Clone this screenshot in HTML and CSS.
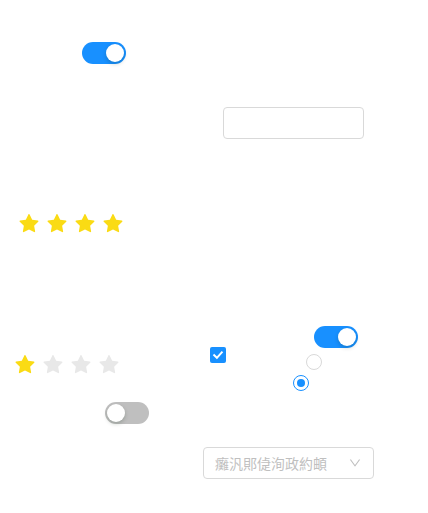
FILE: index.html
```html
<!DOCTYPE html>
<html>
<head>
<meta charset="utf-8">
<link rel="stylesheet" href="styles.css">
</head>
<body>
<div class="row row1">
  <span class="switch on"><span class="knob"></span></span>
</div>
<div class="row row2">
  <input class="input" type="text">
</div>
<div class="row row3">
  <div class="rate">
    <svg class="star full" viewBox="64 64 896 896"><path d="M908.1 353.1l-253.9-36.9L540.7 86.1c-3.1-6.3-8.2-11.4-14.5-14.5-15.8-7.8-35-1.3-42.9 14.5L369.8 316.2l-253.9 36.9c-7 1-13.4 4.3-18.3 9.3a32.05 32.05 0 00.6 45.3l183.7 179.1-43.4 252.9a31.95 31.95 0 0046.4 33.7L512 754l227.1 119.4c6.2 3.3 13.4 4.4 20.3 3.2 17.4-3 29.1-19.5 26.1-36.9l-43.4-252.9 183.7-179.1c5-4.9 8.3-11.3 9.3-18.3 2.7-17.500-9.5-33.700-27-36.300z"/></svg>
    <svg class="star full" viewBox="64 64 896 896"><path d="M908.1 353.1l-253.9-36.9L540.7 86.1c-3.1-6.3-8.2-11.4-14.5-14.5-15.8-7.8-35-1.3-42.9 14.5L369.8 316.2l-253.9 36.9c-7 1-13.4 4.3-18.3 9.3a32.05 32.05 0 00.6 45.3l183.7 179.1-43.4 252.9a31.95 31.95 0 0046.4 33.7L512 754l227.1 119.4c6.2 3.3 13.4 4.4 20.3 3.2 17.4-3 29.1-19.5 26.1-36.9l-43.4-252.9 183.7-179.1c5-4.9 8.3-11.3 9.3-18.3 2.7-17.5-9.5-33.7-27-36.3z"/></svg>
    <svg class="star full" viewBox="64 64 896 896"><path d="M908.1 353.1l-253.9-36.9L540.7 86.1c-3.1-6.3-8.2-11.4-14.5-14.5-15.8-7.8-35-1.3-42.9 14.5L369.8 316.2l-253.9 36.9c-7 1-13.4 4.3-18.3 9.3a32.05 32.05 0 00.6 45.3l183.7 179.1-43.4 252.9a31.95 31.95 0 0046.4 33.7L512 754l227.1 119.4c6.2 3.3 13.4 4.4 20.3 3.2 17.4-3 29.1-19.5 26.1-36.9l-43.4-252.9 183.7-179.1c5-4.9 8.3-11.3 9.3-18.3 2.7-17.5-9.5-33.7-27-36.3z"/></svg>
    <svg class="star full" viewBox="64 64 896 896"><path d="M908.1 353.1l-253.9-36.9L540.7 86.1c-3.1-6.3-8.2-11.4-14.5-14.5-15.8-7.8-35-1.3-42.9 14.5L369.8 316.2l-253.9 36.9c-7 1-13.4 4.3-18.3 9.3a32.05 32.05 0 00.6 45.3l183.7 179.1-43.4 252.9a31.95 31.95 0 0046.4 33.7L512 754l227.1 119.4c6.2 3.3 13.4 4.4 20.3 3.2 17.4-3 29.1-19.5 26.1-36.9l-43.4-252.9 183.7-179.1c5-4.9 8.3-11.3 9.3-18.3 2.7-17.5-9.5-33.7-27-36.3z"/></svg>
  </div>
</div>
<div class="row row4">
  <div class="rate rate2">
    <svg class="star full" viewBox="64 64 896 896"><path d="M908.1 353.1l-253.9-36.9L540.7 86.1c-3.1-6.3-8.2-11.4-14.5-14.5-15.8-7.8-35-1.3-42.9 14.5L369.8 316.2l-253.9 36.9c-7 1-13.4 4.3-18.3 9.3a32.05 32.05 0 00.6 45.3l183.7 179.1-43.4 252.9a31.95 31.95 0 0046.4 33.7L512 754l227.1 119.4c6.2 3.3 13.4 4.4 20.3 3.2 17.4-3 29.1-19.5 26.1-36.9l-43.4-252.9 183.7-179.1c5-4.9 8.3-11.3 9.3-18.3 2.7-17.5-9.5-33.7-27-36.3z"/></svg>
    <svg class="star empty" viewBox="64 64 896 896"><path d="M908.1 353.1l-253.9-36.9L540.7 86.1c-3.1-6.3-8.2-11.4-14.5-14.5-15.8-7.8-35-1.3-42.9 14.5L369.8 316.2l-253.9 36.9c-7 1-13.4 4.3-18.3 9.3a32.05 32.05 0 00.6 45.3l183.7 179.1-43.4 252.9a31.95 31.95 0 0046.4 33.7L512 754l227.1 119.4c6.2 3.3 13.4 4.4 20.3 3.2 17.4-3 29.1-19.5 26.1-36.9l-43.4-252.9 183.7-179.1c5-4.9 8.3-11.3 9.3-18.3 2.7-17.5-9.5-33.7-27-36.3z"/></svg>
    <svg class="star empty" viewBox="64 64 896 896"><path d="M908.1 353.1l-253.9-36.9L540.7 86.1c-3.1-6.3-8.2-11.4-14.5-14.5-15.8-7.8-35-1.3-42.9 14.5L369.8 316.2l-253.9 36.9c-7 1-13.4 4.3-18.3 9.3a32.05 32.05 0 00.6 45.3l183.7 179.1-43.4 252.9a31.95 31.95 0 0046.4 33.7L512 754l227.1 119.4c6.2 3.3 13.4 4.4 20.3 3.2 17.4-3 29.1-19.5 26.1-36.9l-43.4-252.9 183.7-179.1c5-4.9 8.3-11.3 9.3-18.3 2.7-17.5-9.5-33.7-27-36.3z"/></svg>
    <svg class="star empty" viewBox="64 64 896 896"><path d="M908.1 353.1l-253.9-36.9L540.7 86.1c-3.1-6.3-8.2-11.4-14.5-14.5-15.8-7.8-35-1.3-42.9 14.5L369.8 316.2l-253.9 36.9c-7 1-13.4 4.3-18.3 9.3a32.05 32.05 0 00.6 45.3l183.7 179.1-43.4 252.9a31.95 31.95 0 0046.4 33.7L512 754l227.1 119.4c6.2 3.3 13.4 4.4 20.3 3.2 17.4-3 29.1-19.5 26.1-36.9l-43.4-252.9 183.7-179.1c5-4.9 8.3-11.3 9.3-18.3 2.7-17.5-9.5-33.7-27-36.3z"/></svg>
  </div>
  <span class="checkbox">
    <svg viewBox="0 0 16 16"><path d="M4.2 8.2 L6.9 10.8 L11.8 5.4" fill="none" stroke="#fff" stroke-width="2" stroke-linecap="square"/></svg>
  </span>
  <div class="col">
    <span class="switch on sw2"><span class="knob"></span></span>
    <span class="radio r1"></span>
    <span class="radio checked r2"><span class="dot"></span></span>
  </div>
</div>
<div class="row row5">
  <span class="switch off"><span class="knob"></span></span>
</div>
<div class="row row6">
  <div class="select">
    <span class="placeholder">癱汎郥偼洵政約頔</span>
    <svg class="arrow" viewBox="64 64 896 896"><path d="M884 256h-75c-5.1 0-9.9 2.5-12.9 6.6L512 654.2 227.9 262.6c-3-4.1-7.8-6.6-12.9-6.6h-75c-6.5 0-10.3 7.4-6.5 12.7l352.6 486.1c12.8 17.6 39 17.6 51.7 0l352.6-486.1c3.9-5.3.1-12.7-6.4-12.7z"/></svg>
  </div>
</div>
</body>
</html>
```

FILE: styles.css
```css
html, body {
  margin: 0;
  padding: 0;
  background: #fff;
  font-family: "Noto Sans", "Noto Sans CJK SC", sans-serif;
}
.row {
  display: flex;
  align-items: flex-start;
}
.row1 { margin-top: 42px; padding-left: 82px; height: 22px; }
.row2 { margin-top: 43px; padding-left: 223px; height: 32px; }
.row3 { margin-top: 75px; padding-left: 19px; height: 20px; }
.row4 { margin-top: 92px; padding-left: 15px; height: 65px; }
.row5 { margin-top: 11px; padding-left: 105px; height: 22px; }
.row6 { margin-top: 23px; padding-left: 203px; height: 32px; }

.switch {
  display: inline-block;
  box-sizing: border-box;
  width: 44px;
  height: 22px;
  border-radius: 11px;
  padding: 2px;
  display: flex;
}
.switch.on { background: #1890ff; justify-content: flex-end; }
.switch.off { background: #bfbfbf; justify-content: flex-start; }
.knob {
  width: 18px;
  height: 18px;
  border-radius: 50%;
  background: #fff;
  box-shadow: 0 2px 4px rgba(0, 35, 11, 0.2);
}

.input {
  box-sizing: border-box;
  width: 141px;
  height: 32px;
  margin: 0;
  border: 1px solid #d9d9d9;
  border-radius: 4px;
  outline: none;
  background: #fff;
}

.rate {
  display: flex;
  gap: 8px;
}
.rate2 { margin-top: 29px; }
.star { width: 20px; height: 20px; display: block; }
.star.full { fill: #fadb14; }
.star.empty { fill: #e8e8e8; }

.checkbox {
  box-sizing: border-box;
  width: 16px;
  height: 16px;
  margin-left: 91px;
  margin-top: 21px;
  background: #1890ff;
  border-radius: 2px;
  display: flex;
}
.checkbox svg { width: 16px; height: 16px; }

.col {
  margin-left: 67px;
  display: flex;
  flex-direction: column;
  align-items: flex-start;
}
.sw2 { margin-left: 21px; }
.radio {
  box-sizing: border-box;
  width: 16px;
  height: 16px;
  border-radius: 50%;
  border: 1px solid #d9d9d9;
  background: #fff;
  display: flex;
  align-items: center;
  justify-content: center;
}
.r1 { margin-left: 13px; margin-top: 6px; }
.r2 { margin-top: 5px; border-color: #1890ff; }
.dot {
  width: 8px;
  height: 8px;
  border-radius: 50%;
  background: #1890ff;
}

.select {
  box-sizing: border-box;
  width: 171px;
  height: 32px;
  border: 1px solid #d9d9d9;
  border-radius: 4px;
  display: flex;
  align-items: center;
  padding: 0 12px 0 11px;
  justify-content: space-between;
}
.placeholder {
  font-size: 14px;
  color: #bfbfbf;
  font-family: "Noto Sans CJK SC", sans-serif;
  line-height: 22px;
}
.arrow {
  width: 12px;
  height: 12px;
  fill: #bfbfbf;
}
```
